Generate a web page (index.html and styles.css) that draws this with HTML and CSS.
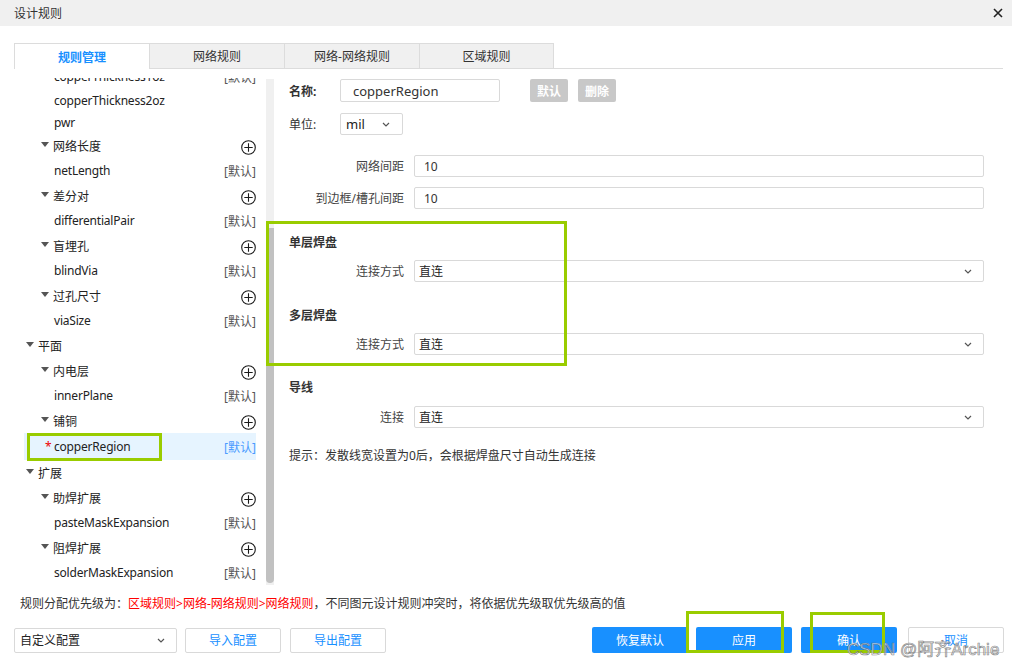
FILE: index.html
```html
<!DOCTYPE html>
<html lang="zh-CN">
<head>
<meta charset="utf-8">
<title>设计规则</title>
<link rel="stylesheet" href="styles.css">
</head>
<body>
<div class="dialog">
  <div class="titlebar">
    <span class="title">设计规则</span>
    <svg class="close" width="10" height="10" viewBox="0 0 10 10"><path d="M1 1L9 9M9 1L1 9" stroke="#222" stroke-width="1.6"/></svg>
  </div>

  <div class="tabs">
    <div class="tab active">规则管理</div>
    <div class="tab">网络规则</div>
    <div class="tab">网络-网络规则</div>
    <div class="tab last">区域规则</div>
  </div>

  <div class="main">
    <div class="tree-pane">
      <div class="tree">
        <div class="tree-inner">
          <div class="row leaf"><span class="label en">copperThickness1oz</span><span class="def">[默认]</span></div>
          <div class="row leaf short"><span class="label en">copperThickness2oz</span></div>
          <div class="row leaf short"><span class="label en">pwr</span></div>
          <div class="row l2"><span class="caret"></span><span class="label">网络长度</span><svg class="add" width="15" height="15" viewBox="0 0 15 15"><circle cx="7.5" cy="7.5" r="6.8" fill="none" stroke="#1a1a1a" stroke-width="1.1"/><path d="M3.3 7.5H11.7M7.5 3.3V11.7" stroke="#1a1a1a" stroke-width="1.1"/></svg></div>
          <div class="row leaf"><span class="label en">netLength</span><span class="def">[默认]</span></div>
          <div class="row l2"><span class="caret"></span><span class="label">差分对</span><svg class="add" width="15" height="15" viewBox="0 0 15 15"><circle cx="7.5" cy="7.5" r="6.8" fill="none" stroke="#1a1a1a" stroke-width="1.1"/><path d="M3.3 7.5H11.7M7.5 3.3V11.7" stroke="#1a1a1a" stroke-width="1.1"/></svg></div>
          <div class="row leaf"><span class="label en">differentialPair</span><span class="def">[默认]</span></div>
          <div class="row l2"><span class="caret"></span><span class="label">盲埋孔</span><svg class="add" width="15" height="15" viewBox="0 0 15 15"><circle cx="7.5" cy="7.5" r="6.8" fill="none" stroke="#1a1a1a" stroke-width="1.1"/><path d="M3.3 7.5H11.7M7.5 3.3V11.7" stroke="#1a1a1a" stroke-width="1.1"/></svg></div>
          <div class="row leaf"><span class="label en">blindVia</span><span class="def">[默认]</span></div>
          <div class="row l2"><span class="caret"></span><span class="label">过孔尺寸</span><svg class="add" width="15" height="15" viewBox="0 0 15 15"><circle cx="7.5" cy="7.5" r="6.8" fill="none" stroke="#1a1a1a" stroke-width="1.1"/><path d="M3.3 7.5H11.7M7.5 3.3V11.7" stroke="#1a1a1a" stroke-width="1.1"/></svg></div>
          <div class="row leaf"><span class="label en">viaSize</span><span class="def">[默认]</span></div>
          <div class="row l1"><span class="caret"></span><span class="label">平面</span></div>
          <div class="row l2"><span class="caret"></span><span class="label">内电层</span><svg class="add" width="15" height="15" viewBox="0 0 15 15"><circle cx="7.5" cy="7.5" r="6.8" fill="none" stroke="#1a1a1a" stroke-width="1.1"/><path d="M3.3 7.5H11.7M7.5 3.3V11.7" stroke="#1a1a1a" stroke-width="1.1"/></svg></div>
          <div class="row leaf"><span class="label en">innerPlane</span><span class="def">[默认]</span></div>
          <div class="row l2"><span class="caret"></span><span class="label">铺铜</span><svg class="add" width="15" height="15" viewBox="0 0 15 15"><circle cx="7.5" cy="7.5" r="6.8" fill="none" stroke="#1a1a1a" stroke-width="1.1"/><path d="M3.3 7.5H11.7M7.5 3.3V11.7" stroke="#1a1a1a" stroke-width="1.1"/></svg></div>
          <div class="row leaf selected"><span class="star">*</span><span class="label en">copperRegion</span><span class="def">[默认]</span></div>
          <div class="row l1"><span class="caret"></span><span class="label">扩展</span></div>
          <div class="row l2"><span class="caret"></span><span class="label">助焊扩展</span><svg class="add" width="15" height="15" viewBox="0 0 15 15"><circle cx="7.5" cy="7.5" r="6.8" fill="none" stroke="#1a1a1a" stroke-width="1.1"/><path d="M3.3 7.5H11.7M7.5 3.3V11.7" stroke="#1a1a1a" stroke-width="1.1"/></svg></div>
          <div class="row leaf"><span class="label en">pasteMaskExpansion</span><span class="def">[默认]</span></div>
          <div class="row l2"><span class="caret"></span><span class="label">阻焊扩展</span><svg class="add" width="15" height="15" viewBox="0 0 15 15"><circle cx="7.5" cy="7.5" r="6.8" fill="none" stroke="#1a1a1a" stroke-width="1.1"/><path d="M3.3 7.5H11.7M7.5 3.3V11.7" stroke="#1a1a1a" stroke-width="1.1"/></svg></div>
          <div class="row leaf"><span class="label en">solderMaskExpansion</span><span class="def">[默认]</span></div>
        </div>
      </div>
      <div class="scroll-track"><div class="scroll-thumb"></div></div>
    </div>

    <div class="form">
      <div class="name-row">
        <span class="head-label bold">名称:</span>
        <div class="input name-input">copperRegion</div>
        <span class="gray-btn first">默认</span>
        <span class="gray-btn">删除</span>
      </div>
      <div class="unit-row">
        <span class="head-label">单位:</span>
        <div class="select unit-select"><span>mil</span><svg class="chev" width="8" height="5" viewBox="0 0 8 5"><path d="M1 1L4 4L7 1" fill="none" stroke="#555" stroke-width="1.2"/></svg></div>
      </div>

      <div class="field first-field">
        <span class="field-label">网络间距</span>
        <div class="input wide">10</div>
      </div>
      <div class="field">
        <span class="field-label">到边框/槽孔间距</span>
        <div class="input wide">10</div>
      </div>

      <div class="sec">单层焊盘</div>
      <div class="field f-sel">
        <span class="field-label">连接方式</span>
        <div class="select wide"><span>直连</span><svg class="chev" width="8" height="5" viewBox="0 0 8 5"><path d="M1 1L4 4L7 1" fill="none" stroke="#555" stroke-width="1.2"/></svg></div>
      </div>

      <div class="sec">多层焊盘</div>
      <div class="field f-sel">
        <span class="field-label">连接方式</span>
        <div class="select wide"><span>直连</span><svg class="chev" width="8" height="5" viewBox="0 0 8 5"><path d="M1 1L4 4L7 1" fill="none" stroke="#555" stroke-width="1.2"/></svg></div>
      </div>

      <div class="sec sec3">导线</div>
      <div class="field f-sel f-sel3">
        <span class="field-label">连接</span>
        <div class="select wide"><span>直连</span><svg class="chev" width="8" height="5" viewBox="0 0 8 5"><path d="M1 1L4 4L7 1" fill="none" stroke="#555" stroke-width="1.2"/></svg></div>
      </div>

      <div class="hint">提示：发散线宽设置为0后，会根据焊盘尺寸自动生成连接</div>
    </div>
  </div>

  <div class="priority">规则分配优先级为：<span class="red">区域规则&gt;网络-网络规则&gt;网络规则</span>，不同图元设计规则冲突时，将依据优先级取优先级高的值</div>

  <div class="footer">
    <div class="select cfg-select"><span>自定义配置</span><svg class="chev" width="8" height="5" viewBox="0 0 8 5"><path d="M1 1L4 4L7 1" fill="none" stroke="#555" stroke-width="1.2"/></svg></div>
    <span class="btn outline b-import">导入配置</span>
    <span class="btn outline b-export">导出配置</span>
    <span class="btn primary b-reset">恢复默认</span>
    <span class="btn primary b-apply">应用</span>
    <span class="btn primary b-ok">确认</span>
    <span class="btn outline b-cancel">取消</span>
  </div>
</div>

<div class="hl hl-tree"></div>
<div class="hl hl-pads"></div>
<div class="hl hl-apply"></div>
<div class="hl hl-ok"></div>
<div class="watermark">CSDN @阿齐Archie</div>
</body>
</html>
```

FILE: styles.css
```css
* { box-sizing: border-box; }
html, body { margin: 0; padding: 0; }
body {
  width: 1012px;
  height: 668px;
  overflow: hidden;
  position: relative;
  background: #fff;
  font-family: "Noto Sans", "Noto Sans CJK SC", sans-serif;
  font-size: 12px;
  color: #333;
}

.titlebar {
  height: 26px;
  background: #f0f0f0;
  display: flex;
  align-items: center;
  justify-content: space-between;
  padding: 0 9px 0 14px;
}
.title { color: #333; }

.tabs {
  display: flex;
  align-items: flex-start;
  margin: 17px 9px 0 14px;
  height: 26px;
  border-bottom: 1px solid #dcdcdc;
}
.tab {
  width: 135px;
  height: 25px;
  border-left: 1px solid #dcdcdc;
  border-top: 1px solid #dcdcdc;
  background: #f0f0f0;
  display: flex;
  align-items: center;
  justify-content: center;
  color: #333;
}
.tab.last { border-right: 1px solid #dcdcdc; width: 135px; }
.tab.active {
  background: #fff;
  color: #1890ff;
  font-weight: bold;
  height: 26px;
  margin-bottom: -1px;
}

.main {
  display: flex;
  height: 521px;
}

.tree-pane {
  width: 274px;
  padding: 9px 0 0 14px;
  display: flex;
}
.tree {
  width: 252px;
  height: 507px;
  overflow: hidden;
}
.tree-inner { margin-top: -14px; }
.row {
  display: flex;
  align-items: center;
  height: 25px;
  margin: 0 10px;
  white-space: nowrap;
}
.row.short { height: 22px; }
.row.l1 { padding-left: 2px; }
.row.l2 { padding-left: 17px; }
.row.leaf { padding-left: 30px; }
.row.selected {
  height: 27px;
  padding-left: 21px;
  background: #e6f4ff;
}
.caret {
  width: 0;
  height: 0;
  border-left: 4px solid transparent;
  border-right: 4px solid transparent;
  border-top: 5px solid #555;
  margin-right: 4px;
  margin-top: -3px;
}
.label { color: #222; }
.label.en { letter-spacing: -0.2px; }
.star { width: 9px; color: #e00; }
.def { margin-left: auto; color: #555; }
.selected .def { color: #4a9bff; }
.add { margin-left: auto; margin-top: 4px; }

.scroll-track {
  width: 8px;
  margin-top: 1px;
  height: 506px;
  background: #f0f0f0;
}
.scroll-thumb {
  margin-top: 149px;
  height: 355px;
  background: #c1c1c1;
  border-radius: 0 0 4px 4px;
}

.form {
  flex: 1;
  padding: 10px 28px 0 15px;
}
.name-row {
  display: flex;
  align-items: center;
  height: 23px;
}
.head-label { width: 51px; }
.bold { font-weight: bold; }
.input {
  border: 1px solid #d9d9d9;
  border-radius: 2px;
  display: flex;
  align-items: center;
  color: #333;
}
.name-input {
  width: 160px;
  height: 23px;
  padding-left: 12px;
  font-size: 13px;
}
.gray-btn {
  width: 38px;
  height: 23px;
  margin-left: 10px;
  background: #c8c8c8;
  color: #fff;
  font-weight: bold;
  border-radius: 2px;
  display: flex;
  align-items: center;
  justify-content: center;
}
.gray-btn.first { margin-left: 30px; }

.unit-row {
  display: flex;
  align-items: center;
  margin-top: 11px;
  height: 22px;
}
.select {
  border: 1px solid #d9d9d9;
  border-radius: 2px;
  display: flex;
  align-items: center;
  justify-content: space-between;
  height: 22px;
  padding: 0 11px 0 4px;
  color: #222;
}
.unit-select { width: 63px; padding: 0 12px 0 5px; font-size: 13px; }

.field {
  display: flex;
  align-items: center;
  height: 22px;
  margin-top: 10px;
}
.first-field { margin-top: 20px; }
.field-label {
  width: 115px;
  margin-right: 10px;
  text-align: right;
  color: #444;
}
.wide { flex: 1; height: 22px; }
.input.wide { padding-left: 9px; }
.f-sel { margin-top: 7px; }
.f-sel3 { margin-top: 8px; }

.sec {
  margin-top: 24px;
  line-height: 20px;
  font-weight: bold;
  color: #333;
}
.sec3 { margin-top: 23px; }
.hint {
  margin-top: 18px;
  line-height: 20px;
  color: #333;
}

.priority {
  margin-top: 4px;
  padding-left: 20px;
  line-height: 20px;
  color: #333;
}
.red { color: #f00; }

.footer {
  display: flex;
  align-items: center;
  margin-top: 13px;
  padding-left: 14px;
}
.cfg-select {
  width: 163px;
  height: 25px;
  padding: 0 11px 0 5px;
}
.btn {
  height: 26px;
  width: 96px;
  border-radius: 2px;
  display: flex;
  align-items: center;
  justify-content: center;
}
.outline {
  border: 1px solid #d9d9d9;
  background: #fff;
  color: #1890ff;
}
.primary {
  background: #1890ff;
  color: #fff;
}
.b-import { margin-left: 8px; height: 25px; }
.b-export { margin-left: 9px; height: 25px; }
.b-reset { margin-left: 206px; }
.b-apply { margin-left: 8px; }
.b-ok { margin-left: 9px; }
.b-cancel { margin-left: 11px; }

.hl {
  position: absolute;
  border: 3px solid #99cc00;
}
.hl-tree { left: 27px; top: 433px; width: 135px; height: 28px; }
.hl-pads { left: 266px; top: 221px; width: 301px; height: 145px; }
.hl-apply { left: 686px; top: 611px; width: 98px; height: 42px; }
.hl-ok { left: 810px; top: 612px; width: 75px; height: 41px; }

.watermark {
  position: absolute;
  left: 847px;
  top: 639px;
  font-family: "Liberation Sans", "Noto Sans CJK SC", sans-serif;
  font-size: 17px;
  line-height: 22px;
  color: rgba(255, 255, 255, 0.6);
  -webkit-text-stroke: 0.7px rgba(105, 105, 105, 0.8);
  white-space: nowrap;
}
```
